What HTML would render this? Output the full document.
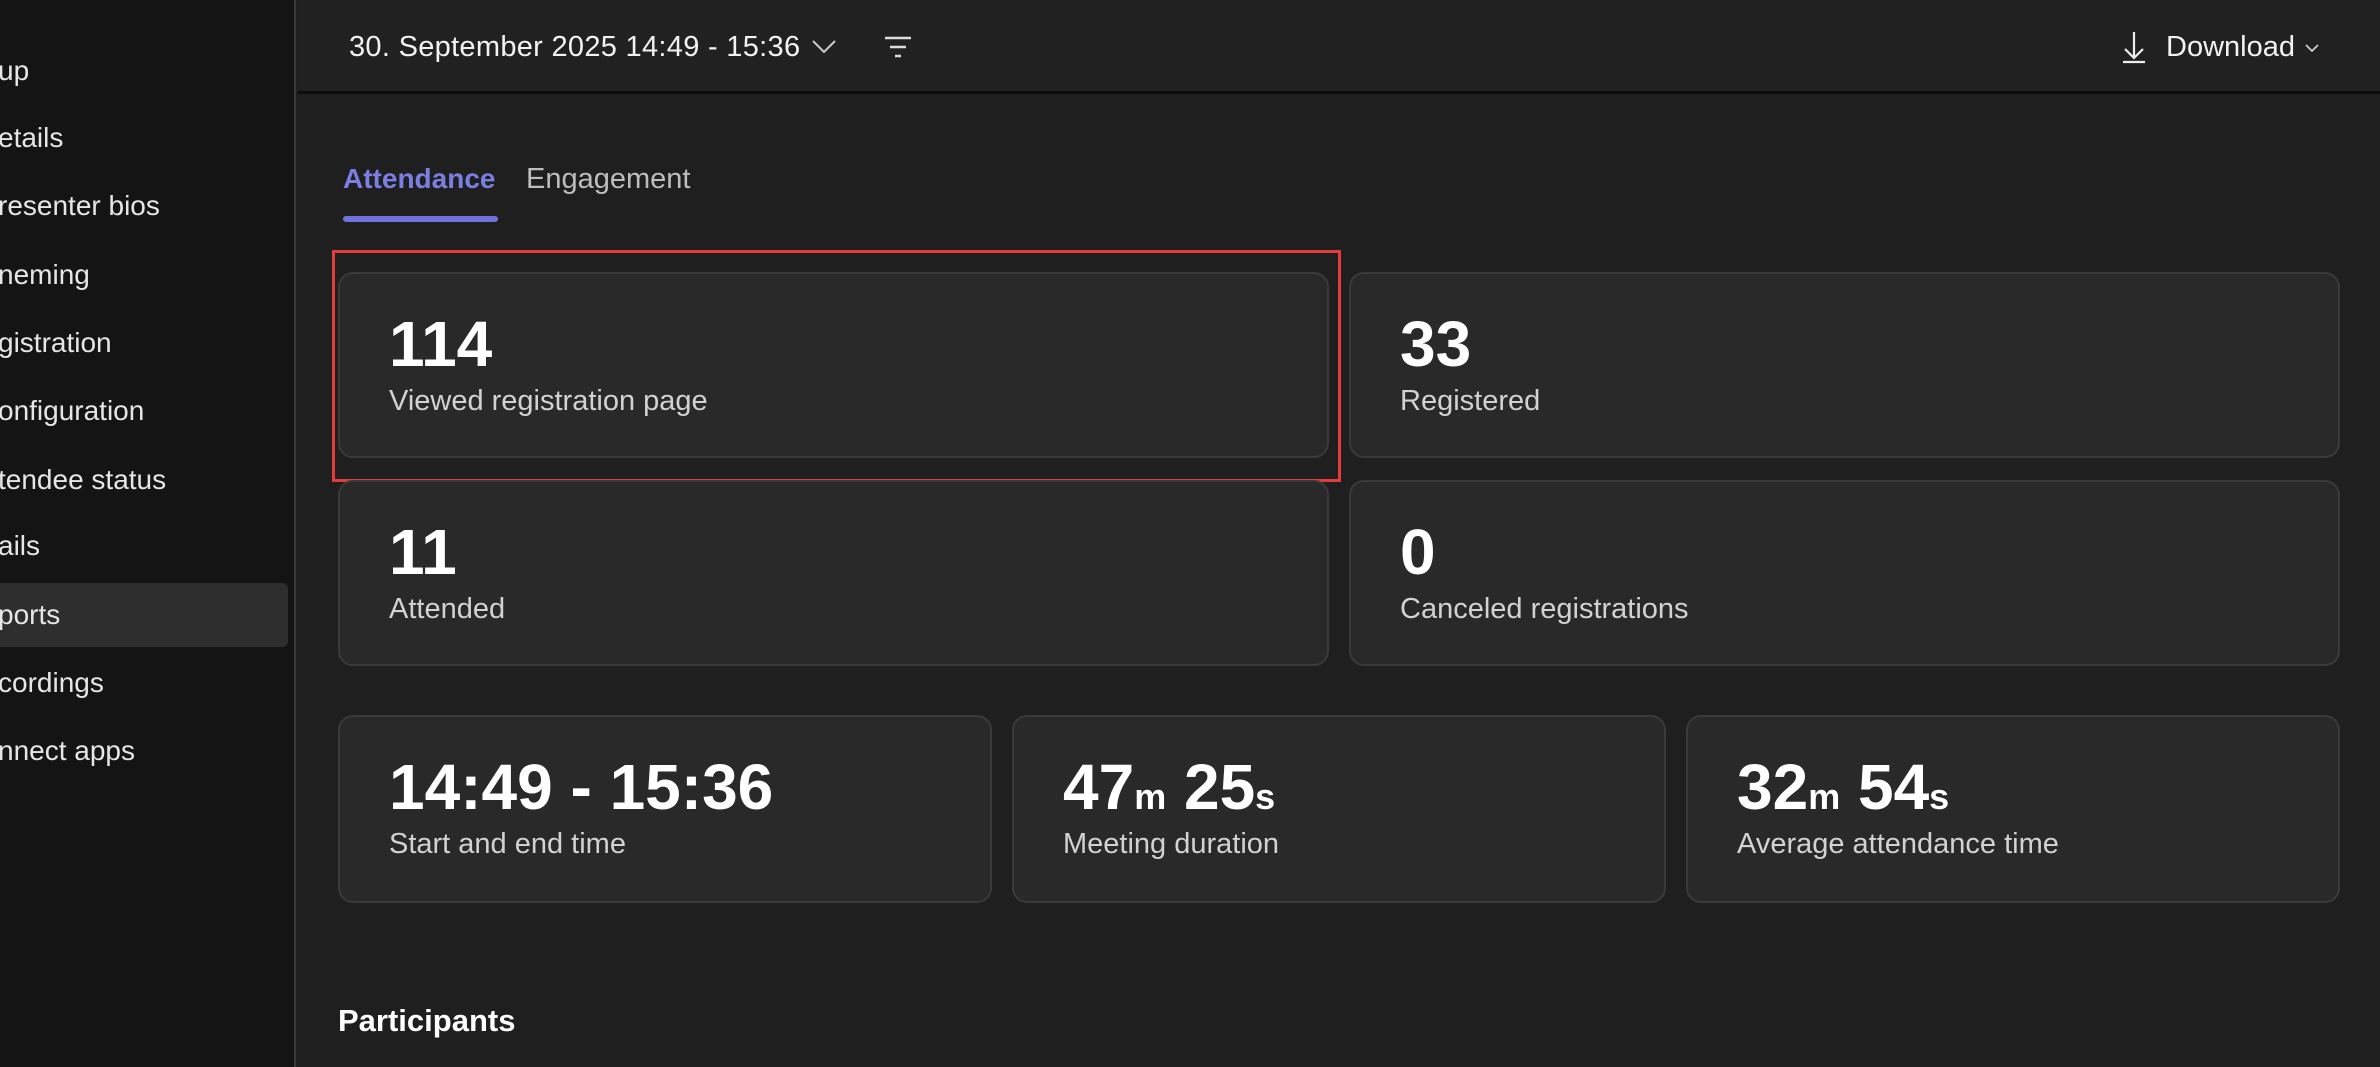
<!DOCTYPE html>
<html><head><meta charset="utf-8"><style>
*{margin:0;padding:0;box-sizing:border-box}
body{width:2380px;height:1067px;overflow:hidden;background:#1f1f1f;font-family:"Liberation Sans",sans-serif;color:#fff;position:relative}
.side{position:absolute;left:0;top:0;width:296px;height:1067px;background:#141414;border-right:2px solid #3a3a3a}
.si{position:absolute;left:-2px;font-size:28px;color:#e6e6e6;line-height:34px;white-space:nowrap}
.act{position:absolute;left:0;top:583px;width:288px;height:64px;background:#2e2e2e;border-radius:0 6px 6px 0}
.hdr{position:absolute;left:298px;top:0;right:0;height:94px;border-bottom:3px solid #0c0c0c;background:#212121}
.t{position:absolute;font-size:28px;line-height:34px;white-space:nowrap}
.card{position:absolute;background:#292929;border:2px solid #3a3a3a;border-radius:15px}
.num{position:absolute;left:49px;top:34px;font-size:64px;font-weight:bold;line-height:72px;letter-spacing:0px}
.num small{font-size:36px;font-weight:bold}
.lbl{position:absolute;left:49px;top:110px;font-size:29px;color:#d2d2d2;line-height:34px}
</style></head><body>
<div class="side">
<div class="act"></div>
<div class="si" style="top:54px">up</div>
<div class="si" style="top:121px">etails</div>
<div class="si" style="top:189px">resenter bios</div>
<div class="si" style="top:258px">neming</div>
<div class="si" style="top:326px">gistration</div>
<div class="si" style="top:394px">onfiguration</div>
<div class="si" style="top:463px">tendee status</div>
<div class="si" style="top:529px">ails</div>
<div class="si" style="top:598px">ports</div>
<div class="si" style="top:666px">cordings</div>
<div class="si" style="top:734px">nnect apps</div>
</div>
<div class="hdr"></div>
<div class="t" style="left:349px;top:30px;color:#f2f2f2;font-size:29px;letter-spacing:0.3px">30. September 2025 14:49 - 15:36</div>
<svg style="position:absolute;left:811px;top:38px" width="26" height="18"><path d="M2 3 L13 14 L24 3" fill="none" stroke="#ccc" stroke-width="2"/></svg>
<svg style="position:absolute;left:883px;top:35px" width="30" height="24"><path d="M2 3H28M7 12H23M12 21H18" stroke="#ddd" stroke-width="2.4" fill="none"/></svg>
<svg style="position:absolute;left:2120px;top:30px" width="28" height="34"><path d="M14 2V28M5 19L14 28L23 19M3 32H25" stroke="#eee" stroke-width="2.2" fill="none"/></svg>
<div class="t" style="left:2166px;top:30px;color:#f2f2f2;font-size:29px">Download</div>
<svg style="position:absolute;left:2304px;top:43px" width="16" height="10"><path d="M2 2L8 8L14 2" stroke="#ccc" stroke-width="1.8" fill="none"/></svg>
<div class="t" style="left:343px;top:162px;color:#7b7fe2;font-weight:bold">Attendance</div>
<div class="t" style="left:526px;top:162px;color:#bdbdbd;font-size:29px">Engagement</div>
<div style="position:absolute;left:343px;top:216px;width:155px;height:6px;border-radius:3px;background:#6f72dc"></div>
<div style="position:absolute;left:332px;top:250px;width:1009px;height:232px;border:3px solid #e23c3c"></div>
<div class="card" style="left:338px;top:272px;width:991px;height:186px"><div class="num">114</div><div class="lbl">Viewed registration page</div></div>
<div class="card" style="left:1349px;top:272px;width:991px;height:186px"><div class="num">33</div><div class="lbl">Registered</div></div>
<div class="card" style="left:338px;top:480px;width:991px;height:186px"><div class="num">11</div><div class="lbl">Attended</div></div>
<div class="card" style="left:1349px;top:480px;width:991px;height:186px"><div class="num">0</div><div class="lbl">Canceled registrations</div></div>
<div class="card" style="left:338px;top:715px;width:654px;height:188px"><div class="num">14:49 - 15:36</div><div class="lbl">Start and end time</div></div>
<div class="card" style="left:1012px;top:715px;width:654px;height:188px"><div class="num">47<small>m</small> 25<small>s</small></div><div class="lbl">Meeting duration</div></div>
<div class="card" style="left:1686px;top:715px;width:654px;height:188px"><div class="num">32<small>m</small> 54<small>s</small></div><div class="lbl">Average attendance time</div></div>
<div class="t" style="left:338px;top:1002px;font-size:31px;font-weight:bold;line-height:38px">Participants</div>
</body></html>
